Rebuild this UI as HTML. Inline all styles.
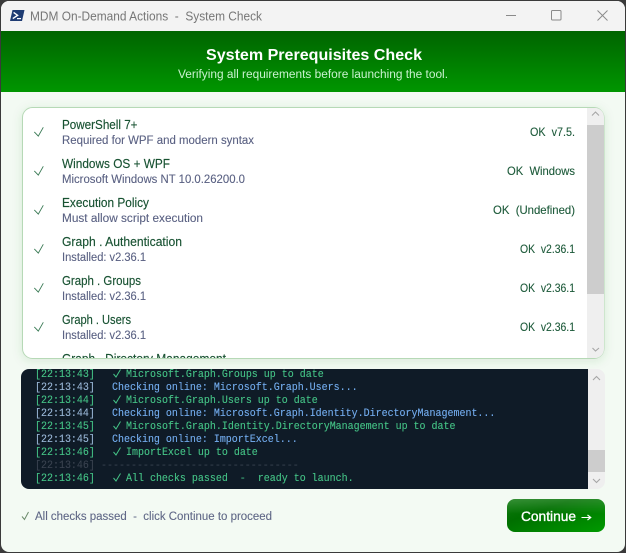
<!DOCTYPE html>
<html><head><meta charset="utf-8"><title>MDM On-Demand Actions - System Check</title>
<style>
html,body{margin:0;padding:0;width:626px;height:553px;overflow:hidden;background:#3a3a3a}
svg{display:block}
text{font-family:"Liberation Sans",sans-serif;white-space:pre}
.n{font-size:13px;fill:#185232;stroke:#185232;stroke-width:.15}
.s{font-size:11.5px;fill:#596082;stroke:#596082;stroke-width:.1}
.o{font-size:12px;fill:#1d5a3a;stroke:#1d5a3a;stroke-width:.12}
.m{font-family:"Liberation Mono","DejaVu Sans Mono",monospace;font-size:11px;stroke-width:.12}
.g{fill:#45c487;stroke:#45c487}.b{fill:#74aef0;stroke:#74aef0}.t{fill:#9ab8d8;stroke:#9ab8d8}.d{fill:#3a4350;stroke:#3a4350}
</style></head><body>
<svg width="626" height="553" viewBox="0 0 626 553" xmlns="http://www.w3.org/2000/svg">
<defs>
<linearGradient id="h" x1="0" y1="0" x2="0" y2="1"><stop offset="0" stop-color="#006400"/><stop offset="1" stop-color="#009600"/></linearGradient>
<linearGradient id="bt" x1="0" y1="0" x2="1" y2="1"><stop offset="0" stop-color="#0f7a0f"/><stop offset=".35" stop-color="#006f00"/><stop offset="1" stop-color="#009a00"/></linearGradient>
<linearGradient id="bh" x1="0" y1="0" x2="0" y2="1"><stop offset="0" stop-color="#fff" stop-opacity=".16"/><stop offset=".45" stop-color="#fff" stop-opacity="0"/></linearGradient>
<filter id="sh" x="-5%" y="-10%" width="110%" height="120%"><feDropShadow dx="0" dy="2" stdDeviation="5" flood-color="#2f7a2f" flood-opacity=".13"/></filter>
<clipPath id="win"><rect x="1" y="1" width="624" height="551" rx="8"/></clipPath>
<clipPath id="card"><rect x="23" y="108" width="581" height="250" rx="9"/></clipPath>
<clipPath id="log"><rect x="21" y="369" width="584" height="120" rx="8"/></clipPath>
</defs>
<rect width="626" height="553" fill="#3a3a3a"/>
<g clip-path="url(#win)">
<rect width="626" height="553" fill="#f3faf3"/>
<rect width="626" height="31" fill="#f3f3f3"/>
<rect y="31" width="626" height="61" fill="url(#h)"/>
</g>
<!-- app icon -->
<path d="M12.5 10H24.5L22 21H10Z" fill="#1f3c73"/>
<path d="M13.6 12.4L17.6 15.3L12.8 18.6" fill="none" stroke="#fff" stroke-width="1.4"/>
<path d="M17 18.6H21" stroke="#fff" stroke-width="1.2"/>
<text x="30" y="20.5" font-size="13" fill="#767676" textLength="232" lengthAdjust="spacingAndGlyphs">MDM On-Demand Actions  -  System Check</text>
<!-- window controls -->
<path d="M506 15.500H516" stroke="#8a8a8a" stroke-width="1"/>
<rect x="551.500" y="10.500" width="9.500" height="9.500" rx="1" fill="none" stroke="#8a8a8a"/>
<path d="M597.500 10.500L607.500 20.500M607.500 10.500L597.500 20.500" stroke="#8a8a8a" stroke-width="1" fill="none"/>
<!-- header -->
<text x="206" y="60" font-size="16" font-weight="700" fill="#fff" textLength="216" lengthAdjust="spacingAndGlyphs">System Prerequisites Check</text>
<text x="178" y="78" font-size="11.5" fill="#c9f2cf" textLength="270" lengthAdjust="spacingAndGlyphs">Verifying all requirements before launching the tool.</text>
<!-- card -->
<rect x="22.500" y="107.500" width="581.500" height="251" rx="10" fill="#fff" stroke="#b6d9b6" filter="url(#sh)"/>
<g clip-path="url(#card)">
<rect x="587" y="108" width="17" height="250" fill="#efefef"/>
<rect x="587" y="125" width="17" height="169" fill="#cdcdcd"/>
<path d="M592 115.500L595.500 112L599 115.500" fill="none" stroke="#a6a6a6" stroke-width="1.1"/>
<path d="M592.500 348L595.500 351L599 348" fill="none" stroke="#a6a6a6" stroke-width="1.1"/>
<g fill="none" stroke="#3a7a55" stroke-width=".9">
<path d="M34.3 131.900L38.3 136.100L43.3 127.300"/>
<path d="M34.3 170.900L38.3 175.100L43.3 166.300"/>
<path d="M34.3 209.900L38.3 214.100L43.3 205.300"/>
<path d="M34.3 248.900L38.3 253.100L43.3 244.300"/>
<path d="M34.3 287.900L38.3 292.100L43.3 283.300"/>
<path d="M34.3 326.900L38.3 331.100L43.3 322.300"/>
</g>
<text class="n" x="62" y="129" textLength="75.500" lengthAdjust="spacingAndGlyphs">PowerShell 7+</text>
<text class="s" x="62" y="144" textLength="192" lengthAdjust="spacingAndGlyphs">Required for WPF and modern syntax</text>
<text class="n" x="62" y="168" textLength="108" lengthAdjust="spacingAndGlyphs">Windows OS + WPF</text>
<text class="s" x="62" y="183" textLength="183" lengthAdjust="spacingAndGlyphs">Microsoft Windows NT 10.0.26200.0</text>
<text class="n" x="62" y="207" textLength="87" lengthAdjust="spacingAndGlyphs">Execution Policy</text>
<text class="s" x="62" y="222" textLength="141" lengthAdjust="spacingAndGlyphs">Must allow script execution</text>
<text class="n" x="62" y="246" textLength="120" lengthAdjust="spacingAndGlyphs">Graph . Authentication</text>
<text class="s" x="62" y="261" textLength="84" lengthAdjust="spacingAndGlyphs">Installed: v2.36.1</text>
<text class="n" x="62" y="285" textLength="79" lengthAdjust="spacingAndGlyphs">Graph . Groups</text>
<text class="s" x="62" y="300" textLength="84" lengthAdjust="spacingAndGlyphs">Installed: v2.36.1</text>
<text class="n" x="62" y="324" textLength="69" lengthAdjust="spacingAndGlyphs">Graph . Users</text>
<text class="s" x="62" y="339" textLength="84" lengthAdjust="spacingAndGlyphs">Installed: v2.36.1</text>
<text class="n" x="62" y="363" textLength="164" lengthAdjust="spacingAndGlyphs">Graph . Directory Management</text>
<text class="o" x="530" y="136" textLength="45" lengthAdjust="spacingAndGlyphs">OK  v7.5.</text>
<text class="o" x="507" y="175" textLength="68" lengthAdjust="spacingAndGlyphs">OK  Windows</text>
<text class="o" x="493" y="214" textLength="82" lengthAdjust="spacingAndGlyphs">OK  (Undefined)</text>
<text class="o" x="520" y="253" textLength="55" lengthAdjust="spacingAndGlyphs">OK  v2.36.1</text>
<text class="o" x="520" y="292" textLength="55" lengthAdjust="spacingAndGlyphs">OK  v2.36.1</text>
<text class="o" x="520" y="331" textLength="55" lengthAdjust="spacingAndGlyphs">OK  v2.36.1</text>
</g>
<!-- log -->
<g clip-path="url(#log)">
<rect x="21" y="369" width="567" height="120" fill="#0f1b27"/>
<rect x="588" y="369" width="17" height="120" fill="#efefef"/>
<rect x="588" y="450" width="17" height="22" fill="#cdcdcd"/>
<path d="M593 380L596.500 376.500L600 380" fill="none" stroke="#a6a6a6" stroke-width="1.1"/>
<path d="M593 479L596.500 482.500L600 479" fill="none" stroke="#a6a6a6" stroke-width="1.1"/>
<g fill="none" stroke="#45c487" stroke-width="1">
<path d="M113.500 374L116 377L120.500 369.500"/>
<path d="M113.500 400L116 403L120.500 395.500"/>
<path d="M113.500 426L116 429L120.500 421.500"/>
<path d="M113.500 452L116 455L120.500 447.500"/>
<path d="M113.500 478L116 481L120.500 473.500"/>
</g>
<text class="m g" x="35" y="377" textLength="59.900" lengthAdjust="spacingAndGlyphs">[22:13:43]</text><text class="m g" x="126" y="377" textLength="197.700" lengthAdjust="spacingAndGlyphs">Microsoft.Graph.Groups up to date</text>
<text class="m t" x="35" y="390" textLength="59.900" lengthAdjust="spacingAndGlyphs">[22:13:43]</text><text class="m b" x="112" y="390" textLength="245.600" lengthAdjust="spacingAndGlyphs">Checking online: Microsoft.Graph.Users...</text>
<text class="m g" x="35" y="403" textLength="59.900" lengthAdjust="spacingAndGlyphs">[22:13:44]</text><text class="m g" x="126" y="403" textLength="191.700" lengthAdjust="spacingAndGlyphs">Microsoft.Graph.Users up to date</text>
<text class="m t" x="35" y="416" textLength="59.900" lengthAdjust="spacingAndGlyphs">[22:13:44]</text><text class="m b" x="112" y="416" textLength="383.400" lengthAdjust="spacingAndGlyphs">Checking online: Microsoft.Graph.Identity.DirectoryManagement...</text>
<text class="m g" x="35" y="429" textLength="59.900" lengthAdjust="spacingAndGlyphs">[22:13:45]</text><text class="m g" x="126" y="429" textLength="329.500" lengthAdjust="spacingAndGlyphs">Microsoft.Graph.Identity.DirectoryManagement up to date</text>
<text class="m t" x="35" y="442" textLength="59.900" lengthAdjust="spacingAndGlyphs">[22:13:45]</text><text class="m b" x="112" y="442" textLength="185.700" lengthAdjust="spacingAndGlyphs">Checking online: ImportExcel...</text>
<text class="m g" x="35" y="455" textLength="59.900" lengthAdjust="spacingAndGlyphs">[22:13:46]</text><text class="m g" x="126" y="455" textLength="131.800" lengthAdjust="spacingAndGlyphs">ImportExcel up to date</text>
<text class="m d" x="35" y="468" textLength="59.900" lengthAdjust="spacingAndGlyphs">[22:13:46]</text><text class="m d" x="101" y="468" textLength="197.700" lengthAdjust="spacingAndGlyphs">---------------------------------</text>
<text class="m g" x="35" y="481" textLength="59.900" lengthAdjust="spacingAndGlyphs">[22:13:46]</text><text class="m g" x="126" y="481" textLength="227.600" lengthAdjust="spacingAndGlyphs">All checks passed  -  ready to launch.</text>
</g>
<!-- status -->
<path d="M22 516.500L24.500 519.500L28.500 512" fill="none" stroke="#6a8a6a" stroke-width="1"/>
<text x="35" y="520" font-size="11.5" fill="#5f6786" stroke="#5f6786" stroke-width=".1" textLength="237" lengthAdjust="spacingAndGlyphs">All checks passed  -  click Continue to proceed</text>
<!-- button -->
<rect x="507" y="499" width="98" height="33" rx="8" fill="url(#bt)"/>
<rect x="507" y="499" width="98" height="33" rx="8" fill="url(#bh)"/>
<text x="521" y="521" font-size="14" fill="#fff" stroke="#fff" stroke-width=".35" textLength="55" lengthAdjust="spacingAndGlyphs">Continue</text>
<path d="M581.500 517.500H590.500M587.500 515L590.800 517.500L587.500 520" fill="none" stroke="#fff" stroke-width="1.1"/>
</svg>
</body></html>
